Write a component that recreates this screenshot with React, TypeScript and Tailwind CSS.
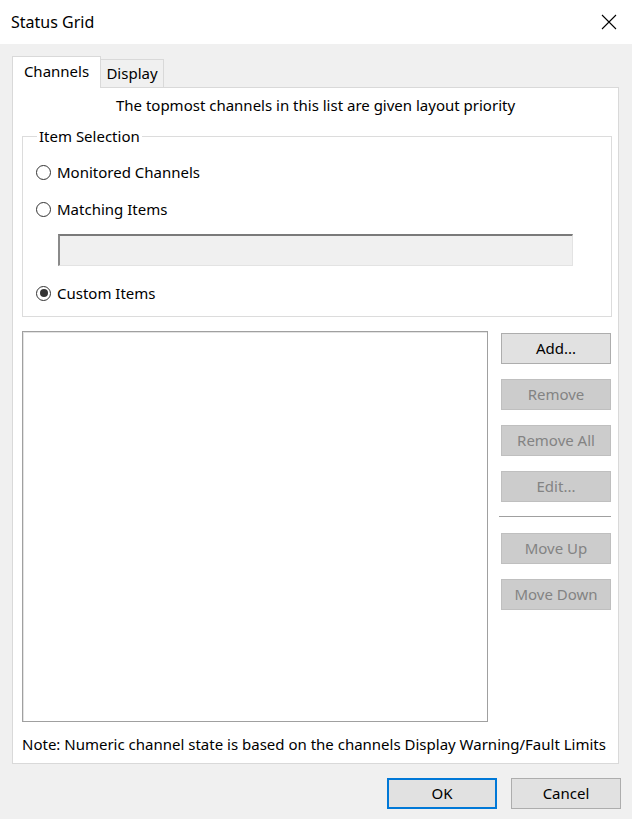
import React from "react";

const font = { fontFamily: '"Noto Sans", "Open Sans", sans-serif' };

function Radio({ checked, label }: { checked?: boolean; label: string }) {
  return (
    <div className="flex h-[20px] items-center">
      <div className="ml-[13px] flex h-[15px] w-[15px] items-center justify-center rounded-full border border-[#333333] bg-white">
        {checked && <div className="h-[8px] w-[8px] rounded-full bg-[#333333]" />}
      </div>
      <span className="ml-[6px] leading-[20px]">{label}</span>
    </div>
  );
}

function SideButton({ label, enabled }: { label: string; enabled?: boolean }) {
  return (
    <div
      className={
        enabled
          ? "flex h-[31px] w-[110px] items-center justify-center border border-[#adadad] bg-[#e1e1e1] text-black"
          : "flex h-[31px] w-[110px] items-center justify-center border border-[#bfbfbf] bg-[#cccccc] text-[#838383]"
      }
    >
      {label}
    </div>
  );
}

export default function App() {
  return (
    <div
      className="flex h-[819px] w-[632px] flex-col bg-[#f0f0f0] text-[15px] text-black"
      style={font}
    >
      {/* Title bar */}
      <div className="flex h-[44px] shrink-0 items-center justify-between bg-white pl-[11px] pr-[11px]">
        <span className="text-[16px] leading-[20px]">Status Grid</span>
        <svg width="16" height="16" viewBox="0 0 16 16" className="mr-[4px]">
          <path d="M1 1 L15 15 M15 1 L1 15" stroke="#000" strokeWidth="1.1" fill="none" />
        </svg>
      </div>

      {/* Tabs */}
      <div className="mt-[12px] flex items-end pl-[12px]">
        <div className="relative z-10 -mb-px flex h-[32px] w-[89px] items-center justify-center border border-b-0 border-[#d9d9d9] bg-white pb-[2px]">
          Channels
        </div>
        <div className="flex h-[28px] w-[63px] items-center justify-center border border-l-0 border-b-0 border-[#d9d9d9] bg-[#f0f0f0]">
          Display
        </div>
      </div>

      {/* Panel */}
      <div className="ml-[12px] flex h-[677px] w-[607px] flex-col border border-[#d9d9d9] bg-white">
        <div className="mt-[7px] h-[20px] text-center leading-[20px]">
          The topmost channels in this list are given layout priority
        </div>

        {/* Group box */}
        <div className="relative ml-[9px] mt-[21px] flex h-[181px] w-[590px] flex-col border border-[#dcdcdc]">
          <span className="absolute left-[14px] top-[-11px] bg-white px-[2px] leading-[20px]">
            Item Selection
          </span>
          <div className="mt-[25px]">
            <Radio label="Monitored Channels" />
          </div>
          <div className="mt-[17px]">
            <Radio label="Matching Items" />
          </div>
          <div className="ml-[35px] mt-[15px] h-[32px] w-[515px] border-l-2 border-t-2 border-b border-r border-l-[#8a8a8a] border-t-[#7a7a7a] border-b-[#e3e3e3] border-r-[#e3e3e3] bg-[#f0f0f0]" />
          <div className="mt-[17px]">
            <Radio checked label="Custom Items" />
          </div>
        </div>

        {/* List + buttons */}
        <div className="ml-[9px] mt-[14px] flex">
          <div className="h-[391px] w-[466px] border border-[#a0a0a0] bg-white shadow-[inset_1px_1px_0_#e3e3e3]" />
          <div className="ml-[13px] mt-[2px] flex flex-col">
            <SideButton label="Add..." enabled />
            <div className="mt-[15px]">
              <SideButton label="Remove" />
            </div>
            <div className="mt-[15px]">
              <SideButton label="Remove All" />
            </div>
            <div className="mt-[15px]">
              <SideButton label="Edit..." />
            </div>
            <div className="-ml-[2px] mt-[14px] h-[2px] w-[112px] border-t border-b border-t-[#a0a0a0] border-b-white" />
            <div className="mt-[15px]">
              <SideButton label="Move Up" />
            </div>
            <div className="mt-[15px]">
              <SideButton label="Move Down" />
            </div>
          </div>
        </div>

        <div className="ml-[9px] mt-[12px] h-[20px] whitespace-nowrap leading-[20px]">
          Note: Numeric channel state is based on the channels Display Warning/Fault Limits
        </div>
      </div>

      {/* Footer buttons */}
      <div className="mt-[14px] flex justify-end gap-[14px] pr-[11px]">
        <div className="flex h-[31px] w-[110px] items-center justify-center border-2 border-[#0078d7] bg-[#e1e1e1]">
          OK
        </div>
        <div className="flex h-[31px] w-[110px] items-center justify-center border border-[#adadad] bg-[#e1e1e1]">
          Cancel
        </div>
      </div>
    </div>
  );
}
